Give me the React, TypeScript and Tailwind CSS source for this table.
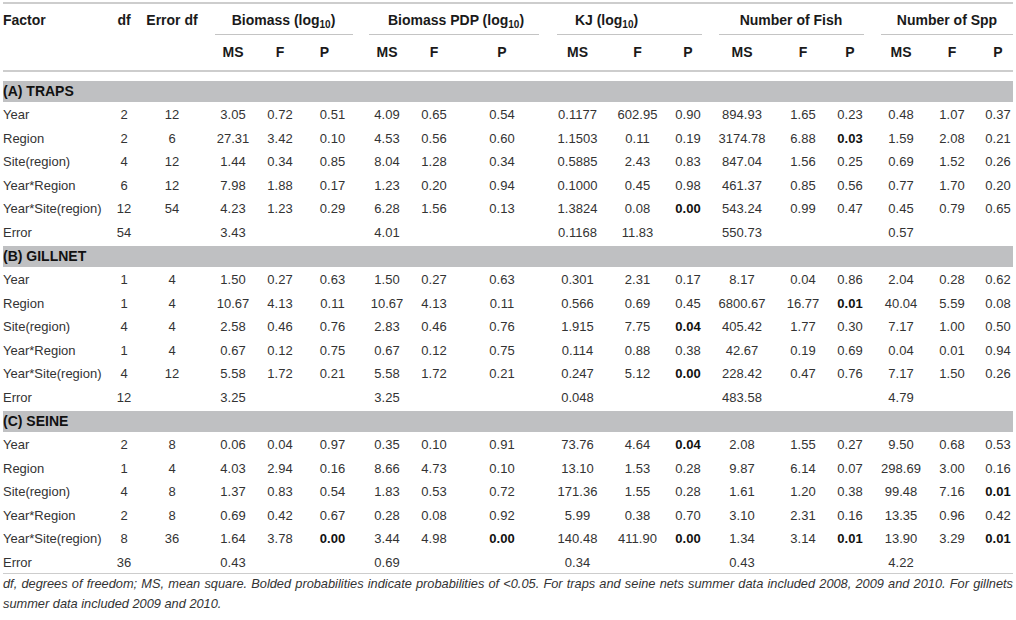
import React from "react";

const COLS =
  "grid grid-cols-[97px_48px_54px_54px_50px_53px_51px_58px_72px_67px_56px_52px_57px_54px_50px_50px_49px_38px]";

// per-column nudges so values sit where the printed table has them
const SHIFT = [
  "justify-start",
  "",
  "pr-[6px]",
  "pl-[8px]",
  "pr-[2px]",
  "",
  "pl-[5px]",
  "pr-[10px]",
  "pr-[4px]",
  "pl-[8px]",
  "pl-[5px]",
  "pr-[2px]",
  "pr-[3px]",
  "pl-[8px]",
  "pr-[2px]",
  "",
  "pl-[3px]",
  "pl-[8px]",
];

const GROUPS = [
  { title: "Biomass", log: true, line: "ml-[13px] mr-[6px]", pos: "pl-[6px]" },
  { title: "Biomass PDP", log: true, line: "ml-[10px] mr-[1px]", pos: "pl-[13px]" },
  { title: "KJ", log: true, line: "ml-[17px] mr-[13px]", pos: "pr-[42px]" },
  { title: "Number of Fish", log: false, line: "ml-[4px] mr-[12px]", pos: "pr-[9px]" },
  { title: "Number of Spp", log: false, line: "ml-[5px] mr-0", pos: "pl-[5px]" },
];

type Section = { name: string; rows: string[][] };

const SECTIONS: Section[] = [
  {
    name: "(A) TRAPS",
    rows: [
      ["Year", "2", "12", "3.05", "0.72", "0.51", "4.09", "0.65", "0.54", "0.1177", "602.95", "0.90", "894.93", "1.65", "0.23", "0.48", "1.07", "0.37"],
      ["Region", "2", "6", "27.31", "3.42", "0.10", "4.53", "0.56", "0.60", "1.1503", "0.11", "0.19", "3174.78", "6.88", "*0.03", "1.59", "2.08", "0.21"],
      ["Site(region)", "4", "12", "1.44", "0.34", "0.85", "8.04", "1.28", "0.34", "0.5885", "2.43", "0.83", "847.04", "1.56", "0.25", "0.69", "1.52", "0.26"],
      ["Year*Region", "6", "12", "7.98", "1.88", "0.17", "1.23", "0.20", "0.94", "0.1000", "0.45", "0.98", "461.37", "0.85", "0.56", "0.77", "1.70", "0.20"],
      ["Year*Site(region)", "12", "54", "4.23", "1.23", "0.29", "6.28", "1.56", "0.13", "1.3824", "0.08", "*0.00", "543.24", "0.99", "0.47", "0.45", "0.79", "0.65"],
      ["Error", "54", "", "3.43", "", "", "4.01", "", "", "0.1168", "11.83", "", "550.73", "", "", "0.57", "", ""],
    ],
  },
  {
    name: "(B) GILLNET",
    rows: [
      ["Year", "1", "4", "1.50", "0.27", "0.63", "1.50", "0.27", "0.63", "0.301", "2.31", "0.17", "8.17", "0.04", "0.86", "2.04", "0.28", "0.62"],
      ["Region", "1", "4", "10.67", "4.13", "0.11", "10.67", "4.13", "0.11", "0.566", "0.69", "0.45", "6800.67", "16.77", "*0.01", "40.04", "5.59", "0.08"],
      ["Site(region)", "4", "4", "2.58", "0.46", "0.76", "2.83", "0.46", "0.76", "1.915", "7.75", "*0.04", "405.42", "1.77", "0.30", "7.17", "1.00", "0.50"],
      ["Year*Region", "1", "4", "0.67", "0.12", "0.75", "0.67", "0.12", "0.75", "0.114", "0.88", "0.38", "42.67", "0.19", "0.69", "0.04", "0.01", "0.94"],
      ["Year*Site(region)", "4", "12", "5.58", "1.72", "0.21", "5.58", "1.72", "0.21", "0.247", "5.12", "*0.00", "228.42", "0.47", "0.76", "7.17", "1.50", "0.26"],
      ["Error", "12", "", "3.25", "", "", "3.25", "", "", "0.048", "", "", "483.58", "", "", "4.79", "", ""],
    ],
  },
  {
    name: "(C) SEINE",
    rows: [
      ["Year", "2", "8", "0.06", "0.04", "0.97", "0.35", "0.10", "0.91", "73.76", "4.64", "*0.04", "2.08", "1.55", "0.27", "9.50", "0.68", "0.53"],
      ["Region", "1", "4", "4.03", "2.94", "0.16", "8.66", "4.73", "0.10", "13.10", "1.53", "0.28", "9.87", "6.14", "0.07", "298.69", "3.00", "0.16"],
      ["Site(region)", "4", "8", "1.37", "0.83", "0.54", "1.83", "0.53", "0.72", "171.36", "1.55", "0.28", "1.61", "1.20", "0.38", "99.48", "7.16", "*0.01"],
      ["Year*Region", "2", "8", "0.69", "0.42", "0.67", "0.28", "0.08", "0.92", "5.99", "0.38", "0.70", "3.10", "2.31", "0.16", "13.35", "0.96", "0.42"],
      ["Year*Site(region)", "8", "36", "1.64", "3.78", "*0.00", "3.44", "4.98", "*0.00", "140.48", "411.90", "*0.00", "1.34", "3.14", "*0.01", "13.90", "3.29", "*0.01"],
      ["Error", "36", "", "0.43", "", "", "0.69", "", "", "0.34", "", "", "0.43", "", "", "4.22", "", ""],
    ],
  },
];

function Cell({ value, col }: { value: string; col: number }) {
  const bold = value.startsWith("*");
  return (
    <div className={`flex justify-center whitespace-nowrap pt-[5px] leading-[16px] ${SHIFT[col]}`}>
      <span className={bold ? "font-bold text-[#111]" : ""}>{bold ? value.slice(1) : value}</span>
    </div>
  );
}

export default function App() {
  return (
    <div className="h-[620px] w-[1016px] overflow-hidden bg-white px-[3px] pt-[2px] font-['Liberation_Sans',Arial,sans-serif] text-[13px] text-[#333]">
      {/* header */}
      <div className="border-t-2 border-b-2 border-[#cdcdcd] text-[14px] font-bold text-[#1a1a1a]">
        <div className={`${COLS} h-[31px] whitespace-nowrap`}>
          <div className="pt-[8px] leading-[16px]">Factor</div>
          <div className="flex justify-center pt-[8px] leading-[16px]">df</div>
          <div className="flex justify-center pr-[6px] pt-[8px] leading-[16px]">Error df</div>
          {GROUPS.map((g) => (
            <div key={g.title} className="col-span-3 flex flex-col">
              <div className={`flex justify-center pt-[8px] leading-[16px] ${g.pos}`}>
                <span>
                  {g.title}
                  {g.log && (
                    <>
                      {" "}(log<sub className="text-[10px]">10</sub>)
                    </>
                  )}
                </span>
              </div>
              <div className={`mt-auto border-b border-[#c4c4c4] ${g.line}`} />
            </div>
          ))}
        </div>
        <div className={`${COLS} h-[35px] pt-[9px] leading-[16px]`}>
          <div />
          <div />
          <div />
          {GROUPS.map((g, gi) =>
            ["MS", "F", "P"].map((h, hi) => {
              const col = 3 + gi * 3 + hi;
              const shift = gi === 0 && hi === 2 ? "pr-[16px]" : SHIFT[col];
              return (
                <div key={`${g.title}-${h}`} className={`flex justify-center ${shift}`}>
                  {h}
                </div>
              );
            })
          )}
        </div>
      </div>

      {/* body */}
      <div className="mt-[9px]">
        {SECTIONS.map((s) => (
          <div key={s.name} className="pb-[3px] last:pb-0">
            <div className="flex h-[21px] items-center bg-[#bfc0c2] text-[14px] font-bold text-[#111]">
              {s.name}
            </div>
            {s.rows.map((r) => (
              <div key={s.name + r[0]} className={`${COLS} h-[23.5px]`}>
                {r.map((v, i) => (
                  <Cell key={i} value={v} col={i} />
                ))}
              </div>
            ))}
          </div>
        ))}
      </div>

      {/* note */}
      <div className="border-t border-[#cdcdcd] text-justify text-[12.8px] italic leading-[20px] text-[#333]">
        df, degrees of freedom; MS, mean square. Bolded probabilities indicate probabilities of &lt;0.05. For traps and seine
        nets summer data included 2008, 2009 and 2010. For gillnets summer data included 2009 and 2010.
      </div>
    </div>
  );
}
